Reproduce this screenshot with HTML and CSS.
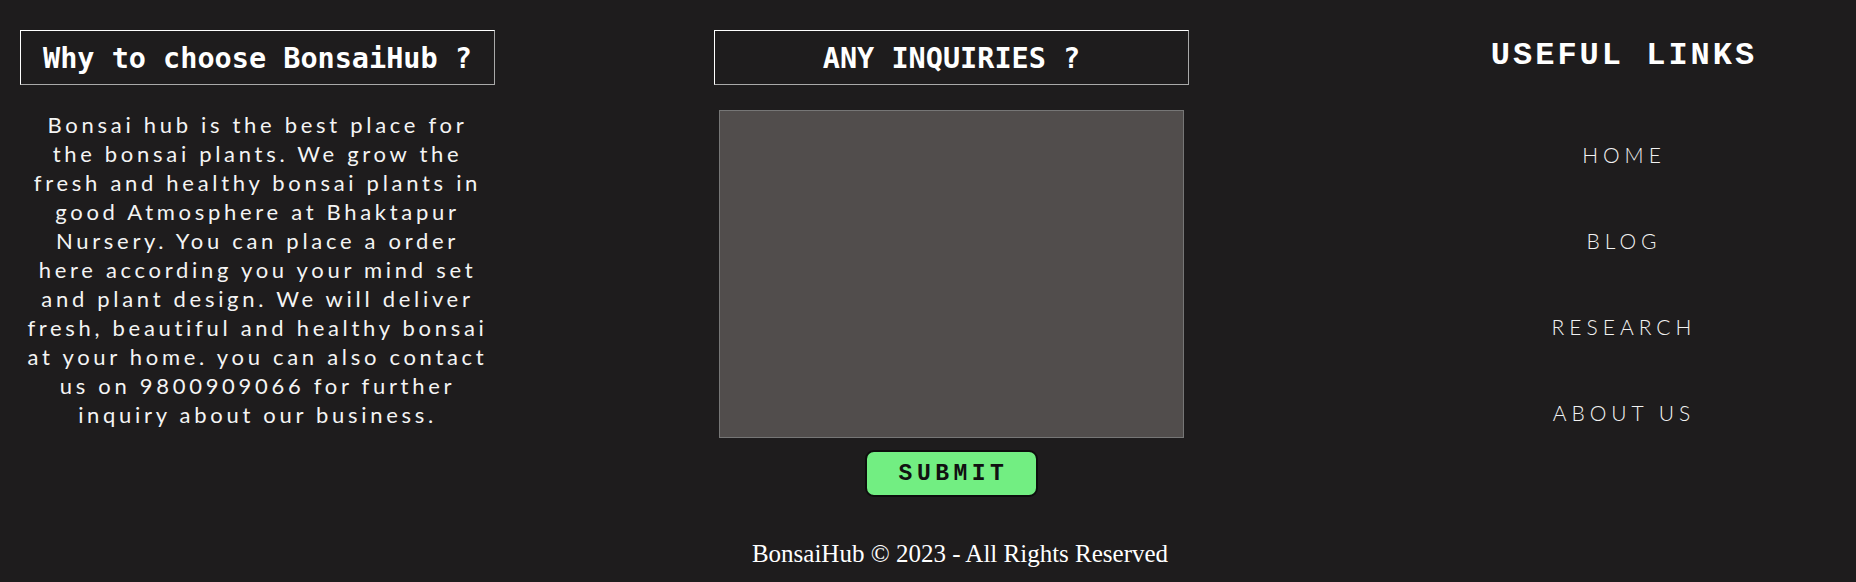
FILE: index.html
```html
<!DOCTYPE html>
<html lang="en">
<head>
<meta charset="utf-8">
<title>BonsaiHub Footer</title>
<link rel="stylesheet" href="styles.css">
</head>
<body>
<footer class="site-footer">
  <div class="cols">
    <section class="col about">
      <h2 class="box-title">Why to choose BonsaiHub ?</h2>
      <p class="about-text">Bonsai hub is the best place for<br>the bonsai plants. We grow the<br>fresh and healthy bonsai plants in<br>good Atmosphere at Bhaktapur<br>Nursery. You can place a order<br>here according you your mind set<br>and plant design. We will deliver<br>fresh, beautiful and healthy bonsai<br>at your home. you can also contact<br>us on 9800909066 for further<br>inquiry about our business.</p>
    </section>
    <section class="col inquiry">
      <h2 class="box-title">ANY INQUIRIES ?</h2>
      <form class="inquiry-form">
        <textarea class="inquiry-input" aria-label="Your inquiry"></textarea>
        <button type="button" class="submit-btn">SUBMIT</button>
      </form>
    </section>
    <section class="col links">
      <h2 class="links-title">USEFUL LINKS</h2>
      <ul class="link-list">
        <li><a href="#">HOME</a></li>
        <li><a href="#">BLOG</a></li>
        <li><a href="#">RESEARCH</a></li>
        <li><a href="#">ABOUT US</a></li>
      </ul>
    </section>
  </div>
  <p class="copyright">BonsaiHub © 2023 - All Rights Reserved</p>
</footer>
</body>
</html>
```
FILE: styles.css
```css
html, body {
  margin: 0;
  padding: 0;
  background: #1e1c1d;
}

.site-footer {
  height: 582px;
  color: #f2f2f2;
  overflow: hidden;
}

.cols {
  display: grid;
  grid-template-columns: 475px 475px 432px;
  column-gap: 219px;
  padding: 30px 0 0 20px;
}

.col {
  display: flex;
  flex-direction: column;
  align-items: center;
}

.box-title {
  align-self: stretch;
  margin: 0;
  padding: 11px 0 9px;
  border: 1px solid;
  border-color: #ffffff #a9a9a9 #a9a9a9 #ffffff;
  font-family: "DejaVu Sans Mono", "Liberation Mono", monospace;
  font-weight: bold;
  font-size: 28.5px;
  line-height: 33px;
  text-align: center;
  color: #ffffff;
}

.about-text {
  margin: 25px -10px 0;
  font-family: "Lato", "Open Sans", sans-serif;
  font-weight: 400;
  font-size: 22px;
  line-height: 29px;
  letter-spacing: 3.7px;
  text-align: center;
  color: #f4f4f4;
}

.inquiry-form {
  display: flex;
  flex-direction: column;
  align-items: center;
}

.inquiry-input {
  box-sizing: border-box;
  display: block;
  width: 465px;
  height: 328px;
  margin: 25px 0 0;
  padding: 0;
  background: #514d4c;
  border: 1px solid #767676;
  resize: none;
}

.submit-btn {
  box-sizing: border-box;
  width: 173px;
  height: 47px;
  margin-top: 12px;
  padding: 0 0 0 4px;
  background: #72ee82;
  border: 2px solid #0d0d0d;
  border-radius: 9px;
  font-family: "Liberation Mono", "Courier New", monospace;
  font-weight: bold;
  font-size: 23px;
  letter-spacing: 4.5px;
  color: #111111;
}

.links-title {
  margin: 8px 0 0;
  font-family: "Liberation Mono", "Courier New", monospace;
  font-weight: bold;
  font-size: 32px;
  line-height: 36px;
  letter-spacing: 3px;
  color: #ffffff;
}

.link-list {
  list-style: none;
  margin: 68px 0 0;
  padding: 0;
  display: flex;
  flex-direction: column;
  align-items: center;
  gap: 60px;
}

.link-list a {
  display: block;
  font-family: "Lato", "Open Sans", sans-serif;
  font-weight: 300;
  font-size: 21px;
  line-height: 26px;
  letter-spacing: 5px;
  color: #f2f2f2;
  text-decoration: none;
}

.copyright {
  margin: 43px 0 0;
  padding-left: 64px;
  font-family: "Liberation Serif", "Times New Roman", serif;
  font-size: 25px;
  text-align: center;
  color: #ffffff;
}
```
